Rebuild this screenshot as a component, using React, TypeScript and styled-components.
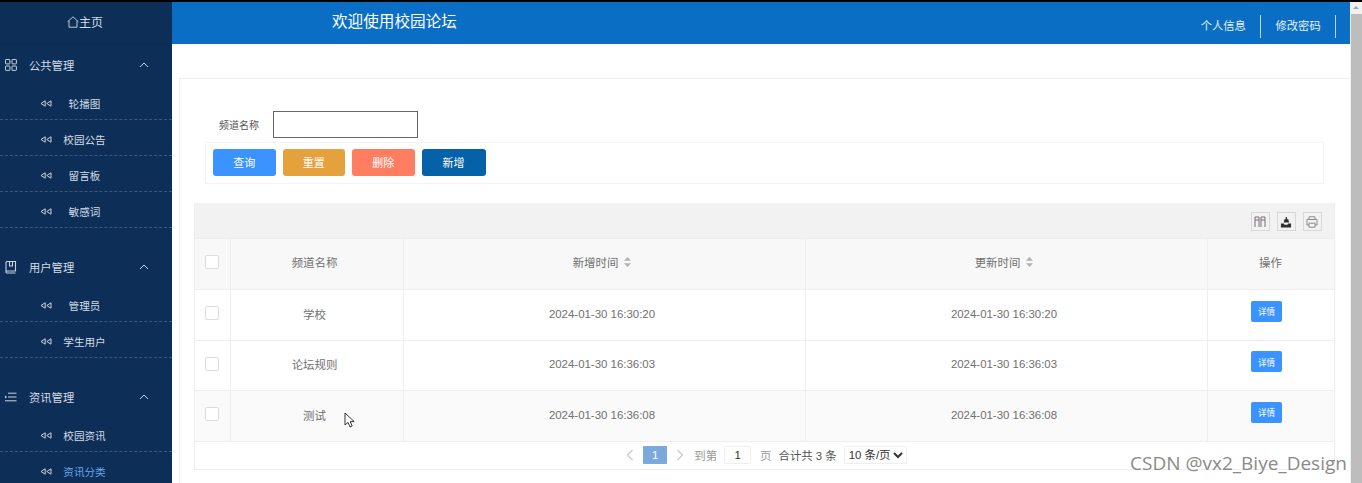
import styled, { createGlobalStyle } from "styled-components";

const CJK = `"Liberation Sans", "Noto Sans CJK SC", sans-serif`;

const menuGroups = [
  { title: "公共管理", icon: "grid", items: ["轮播图", "校园公告", "留言板", "敏感词"] },
  { title: "用户管理", icon: "book", items: ["管理员", "学生用户"] },
  { title: "资讯管理", icon: "list", items: ["校园资讯", "资讯分类"] },
];

const rows = [
  { name: "学校", created: "2024-01-30 16:30:20", updated: "2024-01-30 16:30:20" },
  { name: "论坛规则", created: "2024-01-30 16:36:03", updated: "2024-01-30 16:36:03" },
  { name: "测试", created: "2024-01-30 16:36:08", updated: "2024-01-30 16:36:08", hover: true },
];

function GroupIcon({ kind }: { kind: string }) {
  if (kind === "grid") {
    return (
      <svg width="12" height="12" viewBox="0 0 12 12" fill="none" stroke="#c9d4e0" strokeWidth="1">
        <rect x="0.5" y="0.5" width="4.4" height="4.4" rx="0.6" />
        <rect x="7" y="0.5" width="4.4" height="4.4" rx="0.6" />
        <rect x="0.5" y="7" width="4.4" height="4.4" rx="0.6" />
        <rect x="7" y="7" width="4.4" height="4.4" rx="0.6" />
      </svg>
    );
  }
  if (kind === "book") {
    return (
      <svg width="12" height="13" viewBox="0 0 12 13" fill="none" stroke="#c9d4e0" strokeWidth="1.1">
        <path d="M1 10.5V1.5a1 1 0 0 1 1-1h8.5v9.5H2a1 1 0 0 0 0 2h8.5" />
        <path d="M4.5 1v4h3V1" />
      </svg>
    );
  }
  return (
    <svg width="12" height="10" viewBox="0 0 12 10" fill="none" stroke="#c9d4e0" strokeWidth="1">
      <path d="M3 1.2h8.5M3 5h8.5M0 8.8h11.5" />
      <path d="M0 3.4 L2 5 L0 6.6Z" fill="#c9d4e0" stroke="none" />
    </svg>
  );
}

function RewindIcon() {
  return (
    <svg width="12" height="7" viewBox="0 0 12 7" fill="none" stroke="#c9d4e0" strokeWidth="1">
      <path d="M5.2 0.8 L1 3.5 L5.2 6.2Z" />
      <path d="M11 0.8 L6.8 3.5 L11 6.2Z" />
    </svg>
  );
}

function SortIcon() {
  return (
    <svg width="7" height="10" viewBox="0 0 7 10" fill="#b2b2b2">
      <path d="M3.5 0 L7 3.8 H0Z" />
      <path d="M3.5 10 L7 6.2 H0Z" />
    </svg>
  );
}

function PageChevron({ left }: { left?: boolean }) {
  return (
    <svg width="8" height="12" viewBox="0 0 8 12" fill="none" stroke="#c8c8c8" strokeWidth="1.2">
      <path d={left ? "M6.5 1 L1.5 6 L6.5 11" : "M1.5 1 L6.5 6 L1.5 11"} />
    </svg>
  );
}

export default function App() {
  return (
    <Page>
      <GlobalStyle />
      <TopStrip />
      <Body>
        <Sidebar>
          <HomeRow>
            <svg width="12" height="12" viewBox="0 0 12 12" fill="none" stroke="#d3dce6" strokeWidth="0.9">
              <path d="M0.6 5.8 L6 0.8 L11.4 5.8 M2 4.8 V11.2 H10 V4.8" />
            </svg>
            主页
          </HomeRow>
          {menuGroups.map((group) => (
            <MenuGroup key={group.title}>
              <GroupTitle>
                <GroupIcon kind={group.icon} />
                <span>{group.title}</span>
                <svg width="10" height="6" viewBox="0 0 10 6" fill="none" stroke="#c9d4e0" strokeWidth="1">
                  <path d="M1 5 L5 1 L9 5" />
                </svg>
              </GroupTitle>
              {group.items.map((item) => (
                <MenuItem key={item} $active={item === "资讯分类"}>
                  <RewindIcon />
                  <span>{item}</span>
                </MenuItem>
              ))}
            </MenuGroup>
          ))}
        </Sidebar>

        <Main>
          <Header>
            <HeaderTitle>欢迎使用校园论坛</HeaderTitle>
            <HeaderMenu>
              <HeaderLink>个人信息</HeaderLink>
              <HeaderLink>修改密码</HeaderLink>
            </HeaderMenu>
          </Header>

          <Card>
            <SearchRow>
              <SearchLabel>频道名称</SearchLabel>
              <SearchInput />
            </SearchRow>
            <ButtonBar>
              <ActionButton $bg="#3a93ff">查询</ActionButton>
              <ActionButton $bg="#e5a23c">重置</ActionButton>
              <ActionButton $bg="#ff7d61">删除</ActionButton>
              <ActionButton $bg="#0562a8" $wide>新增</ActionButton>
            </ButtonBar>

            <TableBox>
              <ToolBar>
                <ToolButton>
                  <svg width="12" height="12" viewBox="0 0 12 12" fill="none" stroke="#7a6a78" strokeWidth="1">
                    <path d="M1 1h4v3h-4z M7 1h4v3h-4z M1 4v7 M5 4v7 M7 4v7 M11 4v7" />
                  </svg>
                </ToolButton>
                <ToolButton>
                  <svg width="12" height="12" viewBox="0 0 13 13" fill="#2f2f2f">
                    <path d="M1 8 H4 L5 9.5 H8 L9 8 H12 V12.5 H1Z" />
                    <path d="M4 7 L4.8 3.4 H6.2 V1 H7.6 V3.4 H9 L9.8 7Z" />
                  </svg>
                </ToolButton>
                <ToolButton>
                  <svg width="12" height="12" viewBox="0 0 12 12" fill="none" stroke="#8a8a8a" strokeWidth="1">
                    <path d="M3 3.5V0.8h6v2.7 M3 9H1V3.5h10V9H9 M3 7.2h6v4H3z" />
                  </svg>
                </ToolButton>
              </ToolBar>

              <HeadRow>
                <CheckCell><CheckBox /></CheckCell>
                <Cell>频道名称</Cell>
                <Cell>新增时间<SortSlot><SortIcon /></SortSlot></Cell>
                <Cell>更新时间<SortSlot><SortIcon /></SortSlot></Cell>
                <Cell>操作</Cell>
              </HeadRow>

              {rows.map((row) => (
                <DataRow key={row.name} $hover={row.hover}>
                  <CheckCell><CheckBox /></CheckCell>
                  <Cell>{row.name}</Cell>
                  <Cell>{row.created}</Cell>
                  <Cell>{row.updated}</Cell>
                  <Cell><DetailButton>详情</DetailButton></Cell>
                </DataRow>
              ))}

              <Pager>
                <PageChevron left />
                <CurrentPage>1</CurrentPage>
                <PageChevron />
                <PagerMuted>到第</PagerMuted>
                <PageInput defaultValue="1" />
                <PagerMuted>页</PagerMuted>
                <PagerText>合计共 3 条</PagerText>
                <PageSelect defaultValue="10">
                  <option value="10">10 条/页</option>
                </PageSelect>
              </Pager>
            </TableBox>
          </Card>
        </Main>

        <ScrollBar>
          <ScrollArrow />
          <ScrollThumb />
        </ScrollBar>
      </Body>

      <Cursor width="12" height="16" viewBox="0 0 12 16">
        <path d="M1 1 V13 L4 10.4 L6 15 L8.2 14 L6.2 9.6 H10.2Z" fill="#fff" stroke="#333" strokeWidth="1" />
      </Cursor>
      <Watermark>CSDN @vx2_Biye_Design</Watermark>
    </Page>
  );
}

const GlobalStyle = createGlobalStyle`
  html, body {
    margin: 0;
    padding: 0;
    background: #fff;
    overflow: hidden;
  }

  * {
    box-sizing: border-box;
  }
`;

const Page = styled.div`
  position: relative;
  width: 1362px;
  height: 483px;
  overflow: hidden;
  display: flex;
  flex-direction: column;
  font-family: ${CJK};
  background: #fff;
`;

const TopStrip = styled.div`
  height: 2px;
  flex: none;
  background: #000;
`;

const Body = styled.div`
  flex: 1;
  min-height: 0;
  display: flex;
`;

const Sidebar = styled.aside`
  width: 172px;
  flex: none;
  overflow: hidden;
  background: #0d2f57;
  color: #d3dce6;
`;

const HomeRow = styled.div`
  height: 42px;
  display: flex;
  align-items: center;
  justify-content: center;
  padding: 0 2px 2px 0;
  font-size: 12px;
  border-bottom: 1px solid #0c2c52;
`;

const MenuGroup = styled.div`
  margin-bottom: 18px;
`;

const GroupTitle = styled.div`
  height: 40px;
  display: flex;
  align-items: center;
  padding: 2px 23px 0 5px;
  font-size: 11.3px;

  span {
    margin-left: 12px;
  }

  svg:last-child {
    margin-left: auto;
  }
`;

const MenuItem = styled.div<{ $active?: boolean }>`
  height: 36px;
  display: grid;
  grid-template-columns: 12px 65px;
  align-items: center;
  padding: 4px 0 0 40px;
  font-size: 10.6px;
  color: ${(p) => (p.$active ? "#6aa5ee" : "#d3dce6")};
  border-bottom: 1px dashed #3b5676;

  span {
    text-align: center;
  }
`;

const Main = styled.main`
  flex: 1;
  min-width: 0;
  overflow: hidden;
`;

const Header = styled.header`
  height: 42px;
  display: flex;
  align-items: flex-start;
  padding-left: 160px;
  background: #0a6ec4;
  color: #fff;
`;

const HeaderTitle = styled.div`
  font-size: 15.6px;
  line-height: 40px;
`;

const HeaderMenu = styled.div`
  display: flex;
  margin: 13px 14px 0 auto;
`;

const HeaderLink = styled.div`
  height: 23px;
  line-height: 22px;
  padding: 0 14.3px;
  font-size: 11.3px;
  color: #e8f1fa;
  border-right: 1px solid #bcd7ef;
`;

const Card = styled.section`
  margin: 34px 0 0 7px;
  padding: 32px 15px 40px 14px;
  border: 1px solid #efefef;
  border-right: none;
`;

const SearchRow = styled.div`
  display: flex;
  align-items: center;
  height: 27px;
  padding-left: 25px;
`;

const SearchLabel = styled.label`
  width: 54px;
  font-size: 10px;
  color: #555;
`;

const SearchInput = styled.input`
  width: 145px;
  height: 27px;
  padding: 0 6px;
  background: #fff;
  border: 1px solid #666;
  outline: none;
`;

const ButtonBar = styled.div`
  height: 42px;
  margin: 4px 11px 0 11px;
  display: flex;
  align-items: center;
  gap: 7px;
  padding: 0 0 2px 7px;
  border: 1px solid #f3f3f3;
`;

const ActionButton = styled.button<{ $bg: string; $wide?: boolean }>`
  width: ${(p) => (p.$wide ? "64px" : "62.5px")};
  height: 27px;
  padding: 0;
  border: none;
  border-radius: 3px;
  font-family: ${CJK};
  font-size: 11px;
  color: #fff;
  background: ${(p) => p.$bg};
`;

const TableBox = styled.div`
  margin-top: 19px;
  border-left: 1px solid #eee;
  border-right: 1px solid #eee;
  border-bottom: 1px solid #eee;
`;

const ToolBar = styled.div`
  height: 35px;
  display: flex;
  align-items: center;
  justify-content: flex-end;
  gap: 6.5px;
  padding: 2px 12px 0 0;
  background: #f2f2f2;
`;

const ToolButton = styled.div`
  width: 19.5px;
  height: 19.5px;
  display: flex;
  align-items: center;
  justify-content: center;
  border: 1px solid #d8d8d8;
`;

const Cell = styled.div`
  display: flex;
  align-items: center;
  justify-content: center;
  padding: 0 5px 2px 0;
  font-size: 11.45px;
  color: #707070;
  border-left: 1px solid #eee;

  &:last-child {
    padding-right: 1px;
  }
`;

const CheckCell = styled.div`
  display: flex;
  align-items: center;
  padding: 0 0 3px 10px;
`;

const TableRow = styled.div`
  display: grid;
  grid-template-columns: 35px 173px 402px 402px 1fr;
  border-top: 1px solid #eee;
`;

const HeadRow = styled(TableRow)`
  height: 51px;
  background: #f8f8f8;

  ${Cell} {
    padding-bottom: 4px;
  }

  ${CheckCell} {
    padding-bottom: 5px;
  }
`;

const DataRow = styled(TableRow)<{ $hover?: boolean }>`
  height: 50.5px;
  background: ${(p) => (p.$hover ? "#fafafa" : "#fff")};
`;

const CheckBox = styled.span`
  width: 14px;
  height: 14px;
  border: 1px solid #ddd;
  border-radius: 2px;
  background: #fff;
`;

const SortSlot = styled.span`
  display: inline-flex;
  margin-left: 6px;
`;

const DetailButton = styled.button`
  width: 31px;
  height: 21px;
  margin: 0 8px 5px 0;
  padding: 0;
  border: none;
  border-radius: 2px;
  font-family: ${CJK};
  font-size: 8.6px;
  color: #fff;
  background: #3a93ff;
`;

const Pager = styled.div`
  height: 28px;
  display: flex;
  align-items: center;
  justify-content: center;
  padding-left: 4px;
  font-size: 11.4px;
  border-top: 1px solid #eee;
`;

const CurrentPage = styled.span`
  width: 24px;
  height: 18px;
  margin: 0 9px;
  line-height: 18px;
  text-align: center;
  font-size: 11.4px;
  color: #fff;
  background: #7ba9de;
  border-radius: 1px;
`;

const PagerMuted = styled.span`
  margin-left: 10px;
  color: #999;
`;

const PageInput = styled.input`
  width: 27px;
  height: 18px;
  margin: 0 -1px 0 7px;
  padding: 0;
  text-align: center;
  font-family: ${CJK};
  font-size: 11.4px;
  color: #333;
  background: #fff;
  border: 1px solid #eee;
  border-radius: 2px;
  outline: none;
`;

const PagerText = styled.span`
  margin-left: 7px;
  color: #555;
`;

const PageSelect = styled.select`
  width: 63px;
  height: 18px;
  margin-left: 7px;
  padding: 0;
  font-family: ${CJK};
  font-size: 11.4px;
  color: #333;
  background: #fff;
  border: 1px solid #eee;
  border-radius: 2px;
  outline: none;
`;

const ScrollBar = styled.div`
  width: 12px;
  flex: none;
  display: flex;
  flex-direction: column;
  background: #f1f1f1;
`;

const ScrollArrow = styled.div`
  height: 12px;
  flex: none;
  position: relative;

  &::after {
    content: "";
    position: absolute;
    left: 3px;
    top: 4px;
    border-left: 3px solid transparent;
    border-right: 3px solid transparent;
    border-bottom: 3px solid #a3a3a3;
  }
`;

const ScrollThumb = styled.div`
  flex: 1;
  margin-left: 1px;
  background: #bdbdbd;
`;

const Cursor = styled.svg`
  position: absolute;
  left: 344px;
  top: 412px;
`;

const Watermark = styled.div`
  position: absolute;
  left: 1130px;
  top: 452px;
  font-family: "Open Sans", sans-serif;
  font-size: 19px;
  line-height: 22px;
  white-space: nowrap;
  color: #8a8a8a;
`;
